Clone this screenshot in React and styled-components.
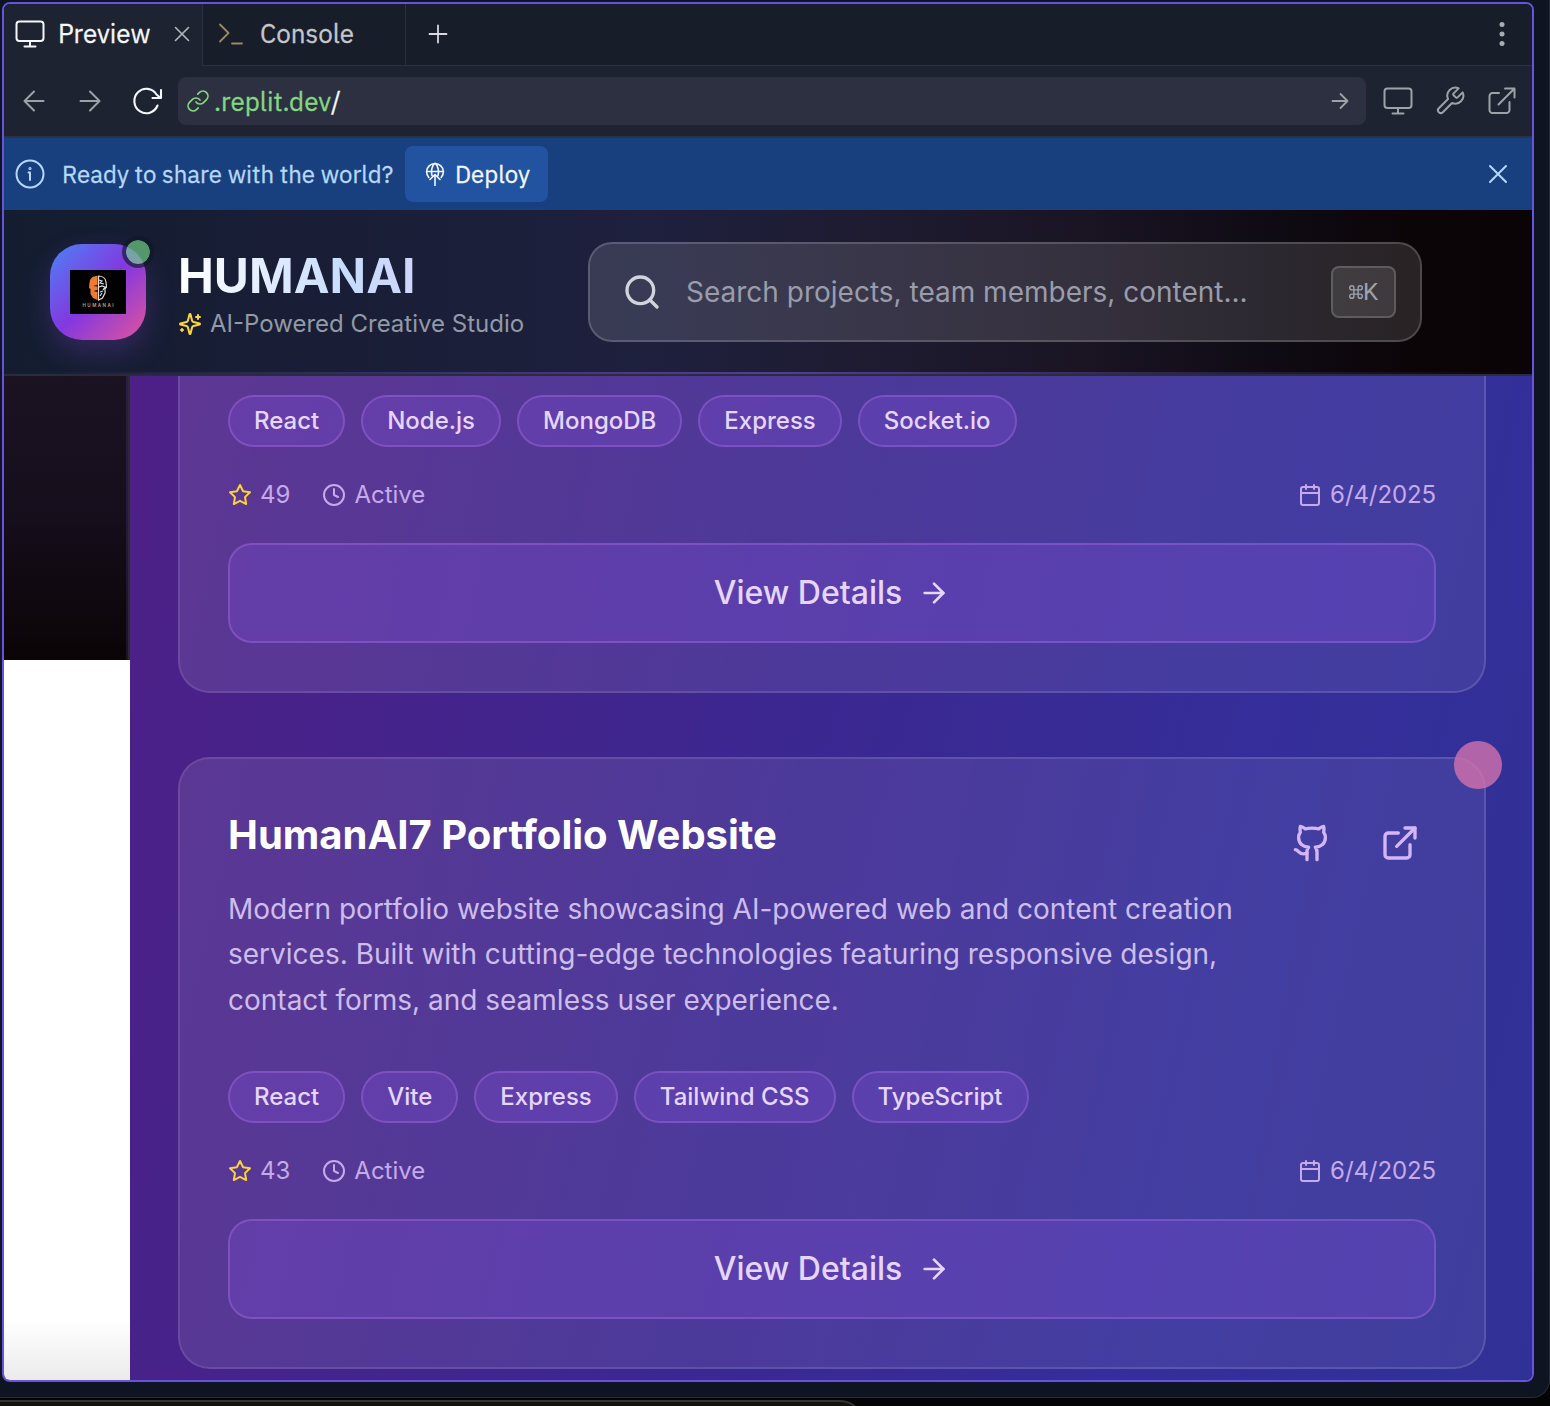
import React from "react";
import styled, { createGlobalStyle } from "styled-components";
import { ArrowRight, Calendar, Clock, ExternalLink, Github, Search } from "lucide-react";

const Global = createGlobalStyle`
  *, *::before, *::after { box-sizing: border-box; }
  body { margin: 0; background: #0e1422; font-family: Inter, "Liberation Sans", sans-serif; }
`;

const Desktop = styled.div`
  width: 1550px;
  height: 1406px;
  overflow: hidden;
  background: #040405;
`;
const Shell = styled.div`
  height: 1398px;
  width: 1550px;
  padding: 2px 14px 14px 2px;
  background: #0e1422;
  border: solid #272c36;
  border-width: 0 1px 1px 0;
  border-radius: 0 0 18px 0;
`;
const Pane = styled.div`
  width: 1532px;
  height: 1380px;
  border: 2px solid #6753dc;
  border-radius: 8px;
  overflow: hidden;
  display: flex;
  flex-direction: column;
`;
const NextWindow = styled.div`
  width: 868px;
  height: 26px;
  margin-top: 2px;
  margin-left: -4px;
  border: 2px solid #34342f;
  border-radius: 0 24px 0 0;
  background: #14110f;
`;

const TabBar = styled.div`
  display: flex;
  height: 62px;
  flex: none;
  background: #181d2a;
  font-family: "IBM Plex Sans", Roboto, sans-serif;
`;
const Tab = styled.div`
  display: flex;
  align-items: center;
  width: ${(p) => p.$w}px;
  padding: 0 0 ${(p) => (p.$active ? 2 : 1)}px ${(p) => p.$pad}px;
  gap: ${(p) => p.$gap}px;
  background: ${(p) => (p.$active ? "#1e2332" : "transparent")};
  border-right: 1px solid #2b3040;
  border-bottom: ${(p) => (p.$active ? "0" : "1px solid #2b3040")};
  color: ${(p) => (p.$active ? "#f5f7fa" : "#c3c7cc")};
  font-size: 26px;
  line-height: 32px;
  svg { flex: none; }
`;
const TabText = styled.span`
  width: ${(p) => p.$w}px;
  margin-top: -2px;
  white-space: nowrap;
  -webkit-text-stroke: 0.3px;
`;
const TabRest = styled.div`
  flex: 1;
  display: flex;
  align-items: center;
  justify-content: space-between;
  padding: 0 20px 1px;
  border-bottom: 1px solid #2b3040;
`;

const Toolbar = styled.div`
  display: flex;
  align-items: center;
  height: 72px;
  flex: none;
  padding: 0 14px 0 16px;
  background: #1e2332;
  border-bottom: 2px solid #2d3243;
  font-family: "IBM Plex Sans", Roboto, sans-serif;
  color: #9da2a6;
`;
const NavButtons = styled.div`
  display: flex;
  align-items: center;
  gap: 28px;
  width: 158px;
`;
const Address = styled.div`
  display: flex;
  align-items: center;
  flex: none;
  width: 1188px;
  height: 48px;
  border-radius: 8px;
  background: #2c3041;
  padding: 0 14px 0 8px;
  font-size: 26px;
  color: #85d782;
`;
const Url = styled.span`
  flex: 1;
  padding-left: 4px;
  -webkit-text-stroke: 0.3px;
  b { font-weight: 400; color: #f5f7fa; }
`;
const Tools = styled.div`
  display: flex;
  gap: 20px;
  margin-left: 16px;
`;

const Banner = styled.div`
  display: flex;
  align-items: center;
  height: 72px;
  flex: none;
  padding: 0 18px 0 10px;
  background: #19407e;
  color: #b5d8fb;
  font: 400 24px "IBM Plex Sans", Roboto, sans-serif;
`;
const BannerText = styled.span`
  width: 359px;
  padding-left: 16px;
  white-space: nowrap;
  -webkit-text-stroke: 0.3px;
`;
const Deploy = styled.button`
  display: flex;
  align-items: center;
  gap: 8px;
  width: 143px;
  height: 56px;
  padding: 0 0 0 18px;
  margin-right: auto;
  border: 0;
  border-radius: 8px;
  background: #2153a1;
  color: #f2f7ff;
  font: inherit;
  -webkit-text-stroke: 0.3px;
`;

const Header = styled.header`
  position: relative;
  display: flex;
  align-items: center;
  height: 166px;
  flex: none;
  padding: 0 46px;
  border-bottom: 2px solid #292c3a;
  background: linear-gradient(90deg, #141d30 0%, #191e36 22%, #1e203e 42%, #1e1b30 58%, #1a1423 71%, #0f0b14 83%, #0c0508 92%, #0b0406 100%);
  &::after {
    content: "";
    position: absolute;
    left: 0;
    right: 0;
    bottom: 0;
    height: 2px;
    background: linear-gradient(90deg, transparent, rgba(139, 92, 246, 0.5) 50%, transparent);
  }
`;
const LogoBox = styled.div`
  position: relative;
  display: flex;
  align-items: center;
  justify-content: center;
  width: 96px;
  height: 96px;
  border-radius: 32px;
  background: linear-gradient(135deg, #4b83f5 0%, #8338e0 50%, #e0559a 100%);
  box-shadow: 0 12px 28px rgba(139, 70, 230, 0.25);
`;
const LogoPlate = styled.div`
  display: flex;
  flex-direction: column;
  align-items: center;
  width: 56px;
  height: 44px;
  padding-top: 5px;
  background: #000;
`;
const LogoName = styled.span`
  font-size: 4.5px;
  line-height: 6px;
  margin-top: 2px;
  font-weight: 600;
  letter-spacing: 1.5px;
  padding-left: 1.5px;
  color: #c4a183;
`;
const Online = styled.i`
  position: absolute;
  top: -8px;
  right: -8px;
  width: 32px;
  height: 32px;
  border-radius: 50%;
  border: 4px solid #111827;
  background: #74da89;
  background-clip: padding-box;
  opacity: 0.65;
`;
const Brand = styled.div`
  width: 410px;
  margin-left: 32px;
  padding-top: 3px;
`;
const BrandName = styled.h1`
  width: max-content;
  margin: 0;
  font-size: 48px;
  line-height: 60px;
  font-weight: 700;
  color: transparent;
  background: linear-gradient(90deg, #fff 0%, #c6dcfd 72%, #d0d5fb 100%);
  background-clip: text;
`;
const Tagline = styled.div`
  display: flex;
  align-items: center;
  gap: 8px;
  height: 36px;
  font-size: 24px;
  color: #9299a7;
  svg { color: #fcd63f; }
`;
const SearchBox = styled.div`
  display: flex;
  align-items: center;
  width: 834px;
  height: 100px;
  padding: 0 24px 0 32px;
  border: 2px solid rgba(255, 255, 255, 0.27);
  border-radius: 24px;
  background: rgba(255, 255, 255, 0.12);
  background-clip: padding-box;
  color: #d1d5db;
`;
const Placeholder = styled.span`
  flex: 1;
  padding-left: 24px;
  font-size: 28px;
  color: #999dab;
`;
const Shortcut = styled.kbd`
  display: flex;
  align-items: center;
  justify-content: center;
  width: 65px;
  height: 52px;
  padding-left: 0;
  border: 2px solid rgba(255, 255, 255, 0.25);
  border-radius: 8px;
  background: rgba(255, 255, 255, 0.1);
  background-clip: padding-box;
  color: #9ca3af;
  font: 400 24px Roboto, sans-serif;
`;

const Body = styled.div`
  display: flex;
  flex: 1;
  min-height: 0;
`;
const Side = styled.aside`
  width: 126px;
  background: linear-gradient(180deg, #fff 0%, #fff 94%, #ebebeb 100%);
`;
const SideNav = styled.div`
  height: 284px;
  border-right: 2px solid #2b2a31;
  background: linear-gradient(180deg, #1c1322 0%, #150e1b 50%, #0b0406 100%);
  box-shadow: inset -2px 0 0 rgba(139, 92, 246, 0.15);
`;
const Main = styled.main`
  flex: 1;
  padding: 0 46px 0 48px;
  overflow: hidden;
  display: flex;
  flex-direction: column;
  gap: 64px;
  background: linear-gradient(103deg, #4d2087 0%, #482289 12%, #3c2790 45%, #352e9a 76%, #303196 100%);
`;
const Card = styled.article`
  position: relative;
  padding: ${(p) => (p.$cut ? "19px" : "48px")} 48px 48px;
  border: 2px solid rgba(255, 255, 255, 0.19);
  border-top-width: ${(p) => (p.$cut ? 0 : 2)}px;
  border-radius: ${(p) => (p.$cut ? "0 0 32px 32px" : "32px")};
  background: linear-gradient(100deg, rgba(255, 255, 255, 0.1), rgba(255, 255, 255, 0.07));
  background-clip: padding-box;
  flex: none;
`;
const CardHead = styled.div`
  display: flex;
  height: 264px;
`;
const CardCopy = styled.div`
  width: 1032px;
`;
const CardTitle = styled.h2`
  margin: 0 0 23.7px;
  font-size: 40px;
  line-height: 56px;
  font-weight: 700;
  color: #fff;
`;
const CardText = styled.p`
  margin: 0;
  font-size: 28px;
  line-height: 45.5px;
  color: #cdbdec;
`;
const Links = styled.div`
  display: flex;
  gap: 16px;
  margin-left: auto;
  color: #d4b6fb;
`;
const IconButton = styled.span`
  display: flex;
  align-items: center;
  justify-content: center;
  width: 72px;
  height: 72px;
`;
const Tags = styled.div`
  display: flex;
  gap: 16px;
`;
const Tag = styled.span`
  height: 52px;
  padding: 0 24px;
  border: 2px solid rgba(160, 102, 226, 0.55);
  border-radius: 26px;
  background: rgba(122, 76, 208, 0.34);
  background-clip: padding-box;
  color: #e6d6fd;
  font-size: 24px;
  line-height: 47px;
  font-weight: 500;
`;
const Stats = styled.div`
  display: flex;
  gap: 32px;
  height: 32px;
  margin: 32px 0;
  font-size: 24px;
  line-height: 30px;
  color: #c5aaec;
`;
const Stat = styled.span`
  display: flex;
  align-items: center;
  gap: 8px;
  letter-spacing: ${(p) => (p.$end ? -0.1 : 0)}px;
  margin-left: ${(p) => (p.$end ? "auto" : 0)};
  svg { color: ${(p) => p.$icon || "inherit"}; }
`;
const ViewButton = styled.button`
  display: flex;
  align-items: center;
  justify-content: center;
  gap: 16px;
  width: 100%;
  height: 100px;
  padding: 0;
  border: 2px solid rgba(160, 102, 226, 0.55);
  border-radius: 24px;
  background: rgba(122, 76, 208, 0.33);
  background-clip: padding-box;
  color: #e6d6fd;
  font: 500 32px Inter, sans-serif;
`;
const ViewLabel = styled.span`
  margin-top: -2px;
`;
const Pin = styled.i`
  position: absolute;
  top: -18px;
  right: -18px;
  width: 48px;
  height: 48px;
  border-radius: 50%;
  background: rgba(214, 115, 173, 0.78);
`;

const Line = ({ w, h = w, sw = 2, children, ...rest }) => (
  <svg width={w} height={h} viewBox={`0 0 ${w} ${h}`} fill="none" stroke="currentColor" strokeWidth={sw} strokeLinecap="round" strokeLinejoin="round" {...rest}>
    {children}
  </svg>
);
const Monitor = () => (
  <Line w={32}>
    <rect x="2.500" y="3.500" width="27" height="19.500" rx="3" />
    <path d="M16 23v5M10.500 28.500h11" />
  </Line>
);
const BackArrow = () => (
  <Line w={28}><path d="M23.500 14H4.500M14 4.500L4.500 14l9.500 9.500" /></Line>
);
const ForwardArrow = () => (
  <Line w={28}><path d="M4.500 14h19M14 4.500l9.500 9.500-9.500 9.500" /></Line>
);
const StarIcon = () => (
  <Line w={24}>
    <polygon points="12 2 15.090 8.260 22 9.270 17 14.140 18.180 21.020 12 17.770 5.820 21.020 7 14.140 2 9.270 8.910 8.260 12 2" />
  </Line>
);
const SparklesIcon = () => (
  <Line w={24}>
    <path d="M9.937 15.500A2 2 0 0 0 8.500 14.063l-6.135-1.582a.5.5 0 0 1 0-.962L8.500 9.936A2 2 0 0 0 9.937 8.500l1.582-6.135a.5.5 0 0 1 .963 0L14.063 8.500A2 2 0 0 0 15.500 9.937l6.135 1.581a.5.5 0 0 1 0 .964L15.500 14.063a2 2 0 0 0-1.437 1.437l-1.582 6.135a.5.5 0 0 1-.963 0z" />
    <path d="M20 3v4M22 5h-4M4 17v2M5 18H3" />
  </Line>
);

const projects = [
  { cut: true, tags: ["React", "Node.js", "MongoDB", "Express", "Socket.io"], stars: 49 },
  {
    title: "HumanAI7 Portfolio Website",
    text: "Modern portfolio website showcasing AI-powered web and content creation services. Built with cutting-edge technologies featuring responsive design, contact forms, and seamless user experience.",
    tags: ["React", "Vite", "Express", "Tailwind CSS", "TypeScript"],
    stars: 43,
  },
];

const Project = ({ cut, title, text, tags, stars }) => (
  <Card $cut={cut}>
    {title && (
      <CardHead>
        <CardCopy>
          <CardTitle>{title}</CardTitle>
          <CardText>{text}</CardText>
        </CardCopy>
        <Links>
          <IconButton><Github size={40} /></IconButton>
          <IconButton><ExternalLink size={40} /></IconButton>
        </Links>
      </CardHead>
    )}
    <Tags>{tags.map((t) => <Tag key={t}>{t}</Tag>)}</Tags>
    <Stats>
      <Stat $icon="#fad23c"><StarIcon /><span>{stars}</span></Stat>
      <Stat><Clock size={24} /><span>Active</span></Stat>
      <Stat $end><Calendar size={24} /><span>6/4/2025</span></Stat>
    </Stats>
    <ViewButton><ViewLabel>View Details</ViewLabel><ArrowRight size={32} /></ViewButton>
    {title && <Pin />}
  </Card>
);

export default function App() {
  return (
    <Desktop>
      <Global />
      <Shell>
        <Pane>
          <TabBar>
            <Tab $active $w={199} $pad={10} $gap={12}>
              <Monitor />
              <TabText $w={104}>Preview</TabText>
              <Line w={16} sw={1.6} stroke="#b4b8bd"><path d="M1.500 1.500l13 13M14.500 1.500l-13 13" /></Line>
            </Tab>
            <Tab $w={203} $pad={14} $gap={15}>
              <Line w={28} sw={1.8} stroke="#988a62"><path d="M3 4.500l8.500 8.500-8.500 8.500M15 23.500h10" /></Line>
              <TabText $w={100}>Console</TabText>
            </Tab>
            <TabRest>
              <Line w={24} sw={1.8} stroke="#d8dade"><path d="M12 3.500v17M3.500 12h17" /></Line>
              <Line w={20} h={28} stroke="none" fill="#a9adb1">
                <circle cx="10" cy="4.500" r="2.500" /><circle cx="10" cy="14" r="2.500" /><circle cx="10" cy="23.500" r="2.500" />
              </Line>
            </TabRest>
          </TabBar>
          <Toolbar>
            <NavButtons>
              <BackArrow />
              <ForwardArrow />
              <Line w={32} stroke="#f5f7fa" sw={2.1}>
                <path d="M25.500 20.500A12 12.200 0 1 1 24.500 9.500L28.500 13M29 5v8h-8.500" />
              </Line>
            </NavButtons>
            <Address>
              <Line w={24} sw={1.7}>
                <path d="M10 13a5 5 0 0 0 7.540.540l3-3a5 5 0 0 0-7.070-7.070l-1.720 1.710M14 11a5 5 0 0 0-7.540-.540l-3 3a5 5 0 0 0 7.070 7.070l1.710-1.710" />
              </Line>
              <Url>.replit.dev<b>/</b></Url>
              <Line w={24} sw={1.8} stroke="#9da2a6"><path d="M4.500 12h15M12.500 5l7 7-7 7" /></Line>
            </Address>
            <Tools>
              <Monitor />
              <Line w={32} viewBox="0 0 24 24" sw={1.5}>
                <path d="M14.700 6.300a1 1 0 0 0 0 1.400l1.600 1.600a1 1 0 0 0 1.400 0l3.770-3.770a6 6 0 0 1-7.940 7.940l-6.910 6.910a2.120 2.120 0 0 1-3-3l6.910-6.910a6 6 0 0 1 7.940-7.940l-3.760 3.760z" />
              </Line>
              <Line w={32}><path d="M13 8H6.500a3 3 0 0 0-3 3v14a3 3 0 0 0 3 3h14a3 3 0 0 0 3-3v-8M12.500 19.500L28 4M19 3.500H28.500V12.500" /></Line>
            </Tools>
          </Toolbar>
          <Banner>
            <Line w={32}><circle cx="16" cy="16" r="13.500" /><path d="M14.500 14.500H16V22" /><circle cx="16" cy="10.500" r=".6" /></Line>
            <BannerText>Ready to share with the world?</BannerText>
            <Deploy>
              <Line w={24} sw={1.6}>
                <path d="M5.800 15.500a8.400 8.400 0 1 1 12.400 0M3.800 9.500h16.400M9 13.500C7.800 9 9 3.500 12 1.200c3 2.300 4.200 7.800 3 12.300M12 12.500v11M7 17.500l5-5 5 5" />
              </Line>
              Deploy
            </Deploy>
            <Line w={32}><path d="M8 8l16 16M24 8L8 24" /></Line>
          </Banner>
          <Header>
            <LogoBox>
              <LogoPlate>
                <svg width="20" height="26" viewBox="0 0 20 26" fill="none">
                  <path d="M9.500 1C5 1 2 3 1.500 7.500L1 13l1.500 1v5l2.500 4 4.500 2V17l-4-1 4-1v-3.500L5 11l4.500-1z" fill="#ee7b32" />
                  <path d="M10.500 1v24l4-2 2.500-5v-4l1.500-2-.5-5c-.5-4-4-6-7.500-6zM11 5l3 1-2 2 4 1M11 12l3-1 3 1-2 3M12 17l3-1M12 21l2-3" stroke="#e0e0e0" strokeWidth="1.200" />
                </svg>
                <LogoName>HUMANAI</LogoName>
              </LogoPlate>
              <Online />
            </LogoBox>
            <Brand>
              <BrandName>HUMANAI</BrandName>
              <Tagline><SparklesIcon />AI-Powered Creative Studio</Tagline>
            </Brand>
            <SearchBox>
              <Search size={40} />
              <Placeholder>Search projects, team members, content...</Placeholder>
              <Shortcut>
                <Line w={14} viewBox="2 2 20 20" sw={2}>
                  <path d="M15 6v12a3 3 0 1 0 3-3H6a3 3 0 1 0 3 3V6a3 3 0 1 0-3 3h12a3 3 0 1 0-3-3" />
                </Line>
                K
              </Shortcut>
            </SearchBox>
          </Header>
          <Body>
            <Side><SideNav /></Side>
            <Main>{projects.map((p) => <Project key={p.stars} {...p} />)}</Main>
          </Body>
        </Pane>
      </Shell>
      <NextWindow />
    </Desktop>
  );
}
